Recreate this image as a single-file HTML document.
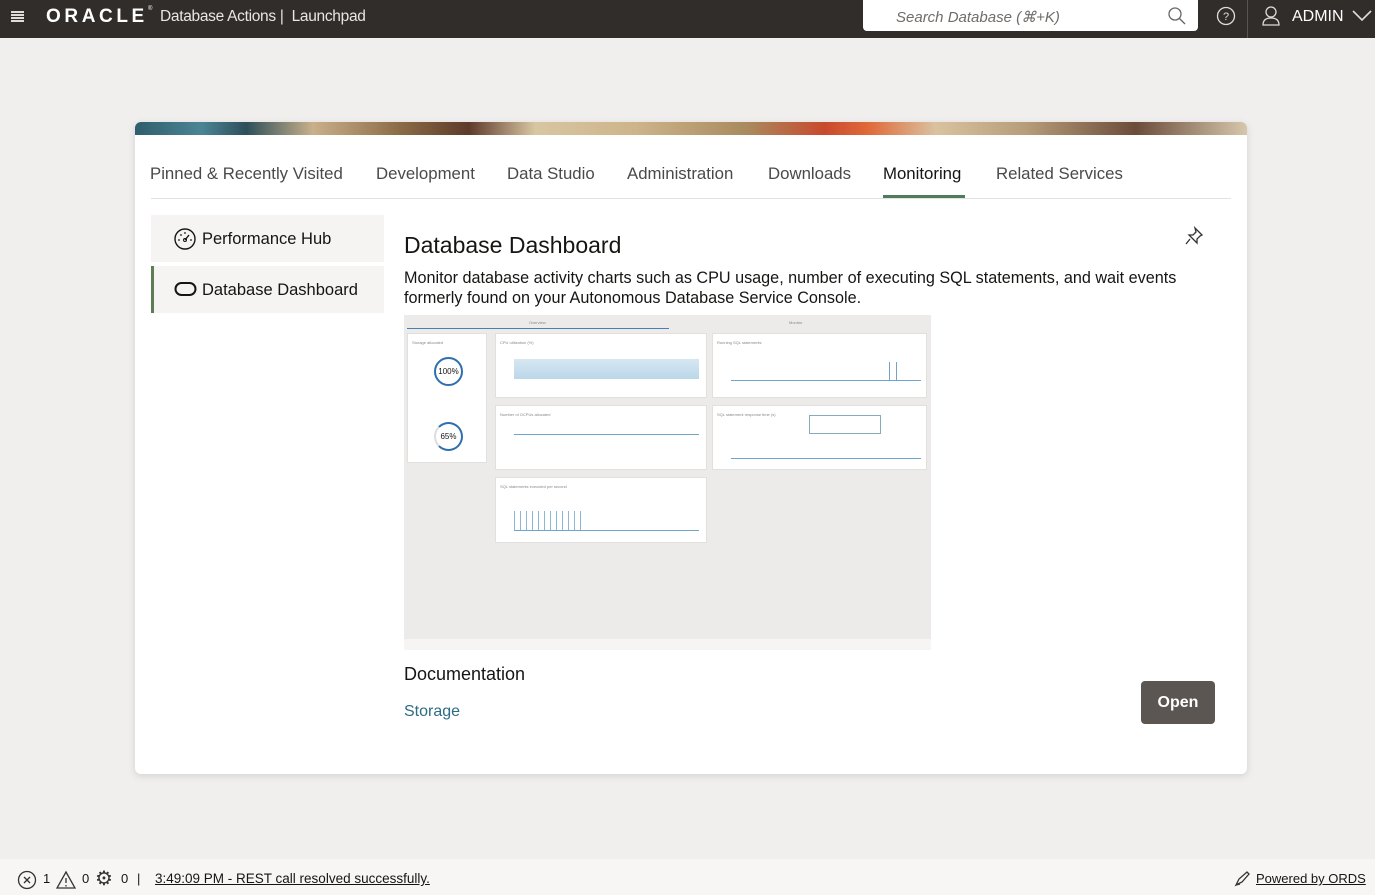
<!DOCTYPE html><html><head><meta charset="utf-8"><style>
*{box-sizing:border-box;margin:0;padding:0}
body{width:1375px;height:895px;overflow:hidden;background:#f1efed;font-family:"Liberation Sans",sans-serif;position:relative;color:#161513}
.hdr{position:absolute;left:0;top:0;width:1375px;height:38px;background:#312d2a;color:#fff}
.abs{position:absolute}
.card{position:absolute;left:135px;top:122px;width:1112px;height:652px;background:#fff;border-radius:6px;box-shadow:0 2px 8px rgba(0,0,0,.12);overflow:hidden}
.banner{height:13px;background:linear-gradient(90deg,#2f5e6c 0,#4b8595 6%,#2d4f5a 10%,#c9b08a 16%,#8a6a45 24%,#5e3a2b 30%,#d8c6a2 36%,#cdb48a 45%,#a98a5f 55%,#c84a2c 62%,#e06a3a 66%,#d9c2a0 72%,#b79e7a 80%,#6b4c3a 90%,#d6c7ac 100%)}
.tab{position:absolute;top:42px;font-size:16.8px;color:#4c4a48;white-space:nowrap}
.side{position:absolute;left:16px;width:233px;height:47px;background:#f5f4f2;font-size:16.5px;color:#161513}
.p{position:absolute;background:#fff;border:1px solid #e2e0dd}
.t{position:absolute;font-size:4px;color:#888;left:4px;top:6px}
</style></head><body>
<div class="hdr">
<div class="abs" style="left:11px;top:11px;width:13px;height:2px;background:#ddd;box-shadow:0 3px 0 #ddd,0 6px 0 #ddd,0 9px 0 #ddd"></div>
<div class="abs" style="left:46px;top:6px;font-size:19px;font-weight:bold;letter-spacing:3.6px">ORACLE</div>
<div class="abs" style="left:148px;top:6px;font-size:6px">®</div>
<div class="abs" style="left:160px;top:8px;font-size:15.5px;color:#e8e6e3;letter-spacing:-0.3px">Database Actions&nbsp;|&nbsp; Launchpad</div>
<div class="abs" style="left:863px;top:0;width:335px;height:31px;background:#fff;border-radius:0 0 4px 4px"></div>
<div class="abs" style="left:896px;top:8px;font-size:15px;font-style:italic;color:#6f6c69">Search Database (⌘+K)</div>
<svg class="abs" style="left:1167px;top:6px" width="20" height="20"><circle cx="8" cy="8" r="6" fill="none" stroke="#666" stroke-width="1.3"/><path d="M12.5 12.5L18 18" stroke="#666" stroke-width="1.3"/></svg>
<svg class="abs" style="left:1216px;top:6px" width="20" height="20"><circle cx="10" cy="10" r="8.5" fill="none" stroke="#ddd" stroke-width="1.3"/><text x="10" y="14" font-size="11" text-anchor="middle" fill="#ddd" font-family="Liberation Sans">?</text></svg>
<div class="abs" style="left:1247px;top:0;width:1px;height:38px;background:#555"></div>
<svg class="abs" style="left:1261px;top:5px" width="20" height="22"><circle cx="10" cy="7" r="5" fill="none" stroke="#ddd" stroke-width="1.3"/><path d="M2 20q0-7 8-7t8 7z" fill="none" stroke="#ddd" stroke-width="1.3"/></svg>
<div class="abs" style="left:1292px;top:8px;font-size:16px">ADMIN</div>
<svg class="abs" style="left:1352px;top:9px" width="20" height="14"><path d="M1 2l9 9 9-9" fill="none" stroke="#ddd" stroke-width="1.6"/></svg>
</div>

<div class="card">
<div class="banner"></div>
<div class="tab" style="left:15px">Pinned &amp; Recently Visited</div>
<div class="tab" style="left:241px">Development</div>
<div class="tab" style="left:372px">Data Studio</div>
<div class="tab" style="left:492px">Administration</div>
<div class="tab" style="left:633px">Downloads</div>
<div class="tab" style="left:748px;color:#161513">Monitoring</div>
<div class="tab" style="left:861px">Related Services</div>
<div class="abs" style="left:16px;top:76px;width:1080px;height:1px;background:#e4e2df"></div>
<div class="abs" style="left:748px;top:73px;width:82px;height:3px;background:#4f7d5b"></div>

<div class="side" style="top:93px"><svg class="abs" style="left:22px;top:12px" width="24" height="24"><circle cx="12" cy="12" r="10" fill="none" stroke="#161513" stroke-width="1.4"/><path d="M12 13l4-5" stroke="#161513" stroke-width="1.4"/><circle cx="12" cy="13" r="1.5" fill="none" stroke="#161513"/><g fill="#161513"><circle cx="6" cy="13" r=".9"/><circle cx="8" cy="8" r=".9"/><circle cx="12" cy="6" r=".9"/><circle cx="18" cy="13" r=".9"/></g></svg><span class="abs" style="left:51px;top:15px">Performance Hub</span></div>
<div class="side" style="top:144px;border-left:3px solid #5e7d52"><svg class="abs" style="left:20px;top:15px" width="24" height="18"><rect x="1.5" y="2" width="20" height="12" rx="6" fill="none" stroke="#161513" stroke-width="2"/></svg><span class="abs" style="left:48px;top:15px">Database Dashboard</span></div>

<div class="abs" style="left:269px;top:110px;font-size:23px">Database Dashboard</div>
<svg class="abs" style="left:1049px;top:104px" width="20" height="20"><path d="M11 2l7 7-2 1-3 3 0 4-8-8 4 0 3-3z M6 13l-4 5" fill="none" stroke="#333" stroke-width="1.3"/></svg>
<div class="abs" style="left:269px;top:146px;font-size:16.2px;line-height:20px;width:810px">Monitor database activity charts such as CPU usage, number of executing SQL statements, and wait events formerly found on your Autonomous Database Service Console.</div>

<div class="abs" style="left:269px;top:193px;width:527px;height:335px;background:#ecebe9">
<div class="abs" style="left:3px;top:13px;width:262px;height:1px;background:#4a7fb5"></div>
<div class="abs" style="left:125px;top:5px;font-size:4px;color:#888">Overview</div>
<div class="abs" style="left:385px;top:5px;font-size:4px;color:#888">Monitor</div>
<div class="p" style="left:3px;top:18px;width:80px;height:130px"><div class="t">Storage allocated</div>
<div class="abs" style="left:26px;top:23px;width:29px;height:29px;border:2px solid #2e6fb0;border-radius:50%;font-size:8px;text-align:center;line-height:25px">100%</div>
<div class="abs" style="left:26px;top:88px;width:29px;height:29px;border:2px solid #2e6fb0;border-left-color:#ddd;border-radius:50%;font-size:8px;text-align:center;line-height:25px">65%</div></div>
<div class="p" style="left:91px;top:18px;width:212px;height:65px"><div class="t">CPU utilization (%)</div><div class="abs" style="left:18px;top:25px;width:185px;height:20px;background:linear-gradient(#cde1ee,#a9cde4);opacity:.8"></div></div>
<div class="p" style="left:308px;top:18px;width:215px;height:65px"><div class="t">Running SQL statements</div><div class="abs" style="left:18px;top:46px;width:190px;height:1px;background:#6fa4cc"></div><div class="abs" style="left:176px;top:28px;width:1px;height:18px;background:#6fa4cc"></div><div class="abs" style="left:183px;top:28px;width:1px;height:18px;background:#6fa4cc"></div></div>
<div class="p" style="left:91px;top:90px;width:212px;height:65px"><div class="t">Number of OCPUs allocated</div><div class="abs" style="left:18px;top:28px;width:185px;height:1px;background:#6fa4cc"></div></div>
<div class="p" style="left:308px;top:90px;width:215px;height:65px"><div class="t">SQL statement response time (s)</div><div class="abs" style="left:96px;top:9px;width:72px;height:19px;border:1px solid #8ab;background:#fff"></div><div class="abs" style="left:18px;top:52px;width:190px;height:1px;background:#6fa4cc"></div></div>
<div class="p" style="left:91px;top:162px;width:212px;height:66px"><div class="t">SQL statements executed per second</div><div class="abs" style="left:18px;top:33px;width:70px;height:20px;background:repeating-linear-gradient(90deg,#8bb8d8 0 1px,transparent 1px 6px)"></div><div class="abs" style="left:18px;top:52px;width:185px;height:1px;background:#6fa4cc"></div></div>
<div class="abs" style="left:0;top:324px;width:527px;height:11px;background:#f6f5f4"></div>
</div>

<div class="abs" style="left:269px;top:542px;font-size:18px">Documentation</div>
<div class="abs" style="left:269px;top:581px;font-size:16px;color:#2d6c85">Storage</div>
<div class="abs" style="left:1006px;top:559px;width:74px;height:43px;background:#5b5652;border-radius:4px;color:#fff;font-size:16px;font-weight:bold;text-align:center;line-height:43px">Open</div>
</div>

<div class="abs" style="left:0;top:859px;width:1375px;height:36px;background:#f7f6f5"></div>
<svg class="abs" style="left:17px;top:870px" width="20" height="20"><circle cx="10" cy="10" r="8.5" fill="none" stroke="#333" stroke-width="1.3"/><path d="M7 7l6 6M13 7l-6 6" stroke="#333" stroke-width="1.3"/></svg>
<div class="abs" style="left:43px;top:871px;font-size:13px">1</div>
<svg class="abs" style="left:56px;top:870px" width="20" height="20"><path d="M10 2L19 18H1z" fill="none" stroke="#333" stroke-width="1.3"/><path d="M10 8v5M10 15v1.5" stroke="#333" stroke-width="1.3"/></svg>
<div class="abs" style="left:82px;top:871px;font-size:13px">0</div>
<div class="abs" style="left:95px;top:866px;font-size:20px;color:#333">⚙</div>
<div class="abs" style="left:121px;top:871px;font-size:13px">0</div>
<div class="abs" style="left:137px;top:871px;font-size:13px">|</div>
<div class="abs" style="left:155px;top:871px;font-size:13.5px"><u>3:49:09 PM - REST call resolved successfully.</u></div>
<svg class="abs" style="left:1233px;top:870px" width="18" height="18"><path d="M3 15l3-6 8-7 2 2-7 8z M3 15l4-1" fill="none" stroke="#333" stroke-width="1.3"/></svg>
<div class="abs" style="left:1256px;top:871px;font-size:13px;color:#161513"><u>Powered by ORDS</u></div>
</body></html>
